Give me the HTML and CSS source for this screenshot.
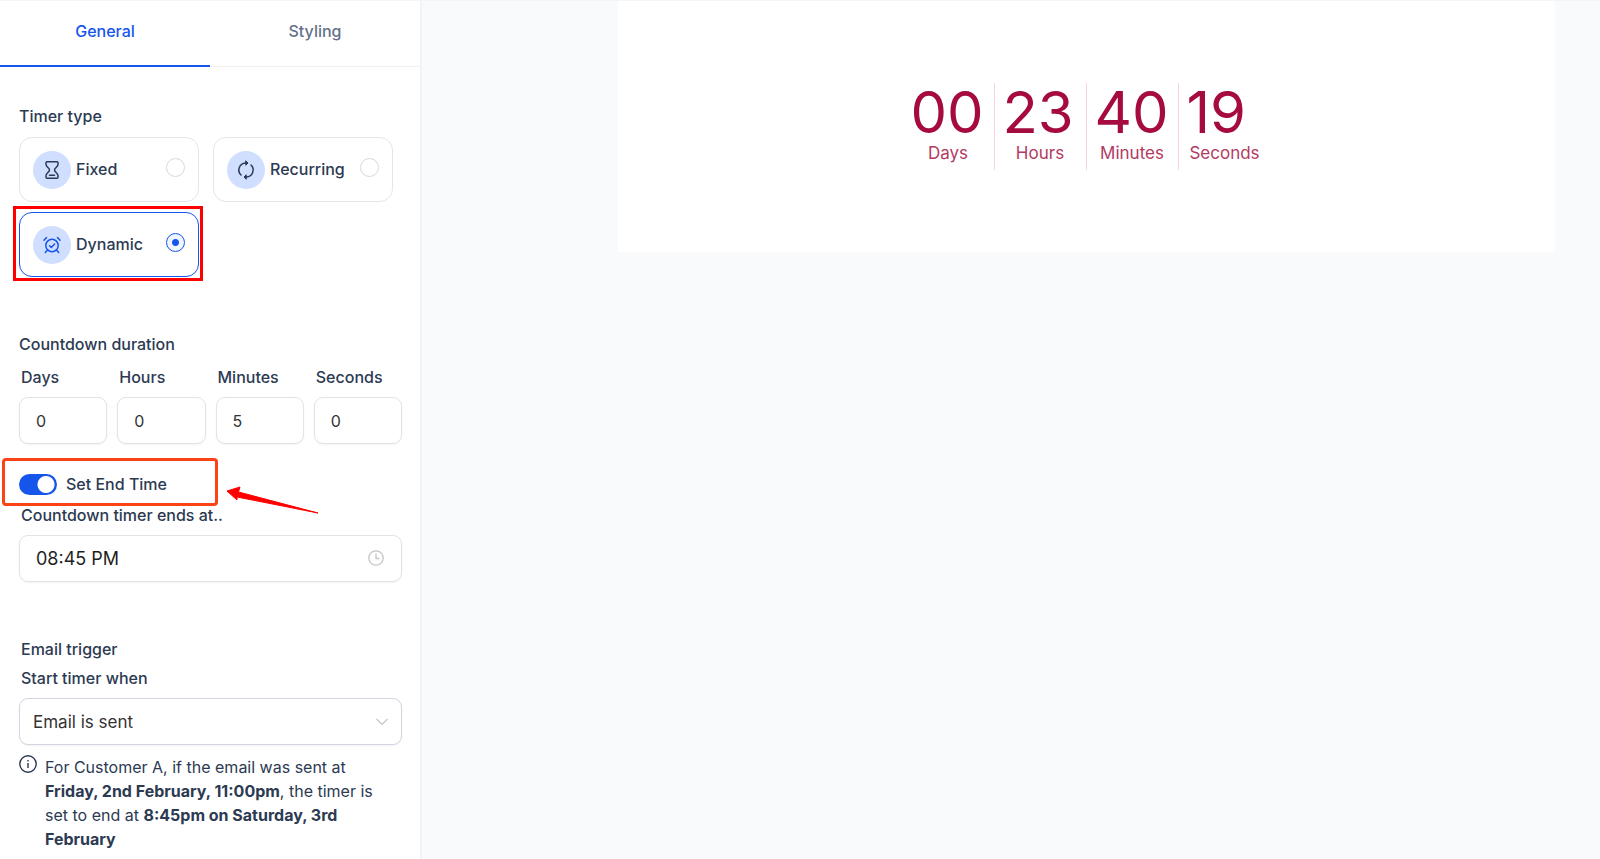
FILE: index.html
```html
<!DOCTYPE html>
<html lang="en">
<head>
  <meta charset="UTF-8">
  <meta name="viewport" content="width=device-width, initial-scale=1.0">
  <title>Countdown Timer</title>
  <link rel="stylesheet" href="styles.css">
</head>
<body>

  <aside class="sidebar">
    <nav class="tabs">
      <button type="button" class="tab active">General</button>
      <button type="button" class="tab">Styling</button>
    </nav>

    <form class="settings">
      <!-- Timer type -->
      <fieldset class="group">
        <legend class="title">Timer type</legend>
        <div class="types">
          <label class="type">
            <span class="type-icon">
              <svg width="20" height="20" viewBox="0 0 20 20" fill="none" stroke="currentColor" stroke-width="1.5" stroke-linejoin="round" stroke-linecap="round">
                <path d="M5 1.800h10a1 1 0 0 1 1 1v1.700c0 2.500-3.500 3.500-3.500 5.500s3.500 3 3.500 5.500v1.700a1 1 0 0 1-1 1H5a1 1 0 0 1-1-1v-1.700c0-2.500 3.500-3.500 3.500-5.500S4 7 4 4.500V2.800a1 1 0 0 1 1-1zM7.500 15.300h5"/>
              </svg>
            </span>
            <span class="type-name">Fixed</span>
            <input type="radio" name="type" class="radio">
          </label>
          <label class="type">
            <span class="type-icon">
              <svg width="20" height="20" viewBox="0 0 20 20" fill="none" stroke="currentColor" stroke-width="1.5" stroke-linejoin="round" stroke-linecap="round">
                <path d="M11 3H9.500A7 7 0 0 0 5 15M9 17h1.500A7 7 0 0 0 15 5"/>
                <path d="M10 1 12 3 10 5zM10 15 8 17l2 2z" fill="currentColor" stroke-width="1"/>
              </svg>
            </span>
            <span class="type-name">Recurring</span>
            <input type="radio" name="type" class="radio">
          </label>
          <label class="type selected">
            <span class="type-icon">
              <svg width="20" height="20" viewBox="0 0 20 20" fill="none" stroke="currentColor" stroke-width="1.5" stroke-linejoin="round" stroke-linecap="round">
                <circle cx="10" cy="10.500" r="6.200"/>
                <path d="M7.500 10.700l1.800 1.700 3.300-3.400M2 5.200 4.500 2.500M18 5.200l-2.500-2.700M5.500 15l-2.200 2.500M14.500 15l2.200 2.500"/>
              </svg>
            </span>
            <span class="type-name">Dynamic</span>
            <input type="radio" name="type" class="radio" checked>
          </label>
        </div>
      </fieldset>

      <!-- Countdown duration -->
      <fieldset class="group">
        <legend class="title">Countdown duration</legend>
        <div class="duration">
          <div class="field">
            <label for="days">Days</label>
            <input type="number" id="days" class="box" value="0">
          </div>
          <div class="field">
            <label for="hours">Hours</label>
            <input type="number" id="hours" class="box" value="0">
          </div>
          <div class="field">
            <label for="minutes">Minutes</label>
            <input type="number" id="minutes" class="box" value="5">
          </div>
          <div class="field">
            <label for="seconds">Seconds</label>
            <input type="number" id="seconds" class="box" value="0">
          </div>
        </div>

        <div class="end-toggle">
          <input type="checkbox" id="setEnd" class="switch" checked>
          <label for="setEnd">Set End Time</label>
          <svg class="arrow" width="94" height="30" viewBox="0 0 94 30">
            <path d="M1 5 14 1 12.500 6 92 27 11 11 11 14z" fill="#f00" stroke="#f00" stroke-linejoin="round"/>
          </svg>
        </div>

        <div class="field">
          <label for="endTime">Countdown timer ends at..</label>
          <div class="control">
            <input type="text" id="endTime" class="box time" value="08:45 PM">
            <svg class="control-icon" width="16" height="16" viewBox="0 0 16 16" fill="none" stroke="#c4c4c4" stroke-width="1.300">
              <circle cx="8" cy="8" r="7.200"/>
              <path d="M8 3.500V8.500h3.500"/>
            </svg>
          </div>
        </div>
      </fieldset>

      <!-- Email trigger -->
      <fieldset class="group">
        <legend class="title indent">Email trigger</legend>
        <div class="field trigger">
          <label for="trigger">Start timer when</label>
          <div class="control">
            <select id="trigger" class="box select">
              <option>Email is sent</option>
            </select>
            <svg class="control-icon chevron" width="12" height="8" viewBox="0 0 12 8" fill="none" stroke="#c4c4c4" stroke-width="1.200">
              <path d="M.5 1 6 6.500 11.500 1"/>
            </svg>
          </div>
        </div>
        <div class="note">
          <svg width="18" height="18" viewBox="0 0 18 18" fill="none" stroke="currentColor" stroke-width="1.400">
            <circle cx="9" cy="9" r="8.200"/>
            <path d="M9 8v5M9 5v1.600"/>
          </svg>
          <p>For Customer A, if the email was sent at <b>Friday, 2nd February, 11:00pm</b>, the timer is set to end at <b>8:45pm on Saturday, 3rd February</b></p>
        </div>
      </fieldset>
    </form>
  </aside>

  <main class="preview">
    <div class="canvas">
      <div class="timer">
        <div class="unit"><span class="number">00</span><span class="name">Days</span></div>
        <div class="unit"><span class="number">23</span><span class="name">Hours</span></div>
        <div class="unit"><span class="number">40</span><span class="name">Minutes</span></div>
        <div class="unit"><span class="number">19</span><span class="name">Seconds</span></div>
      </div>
    </div>
  </main>

</body>
</html>
```

FILE: styles.css
```css
* {
  box-sizing: border-box;
}
body {
  margin: 0;
  min-height: 100vh;
  display: flex;
  font-family: Inter, sans-serif;
  font-size: 16px;
  font-weight: 500;
  line-height: 24px;
  color: #2c3a52;
  background-color: #f8fafc;
  border-top: 1px solid #f3f5f8;
}
input, select, button {
  font-family: inherit;
  font-size: inherit;
}

/* Sidebar */
.sidebar {
  width: 422px;
  flex-shrink: 0;
  background-color: #fff;
  border-right: 2px solid #f1f3f7;
}
.tabs {
  display: flex;
  height: 66px;
}
.tab {
  flex: 1;
  padding: 0 0 6px;
  border: none;
  border-bottom: 1px solid #eef1f6;
  background: none;
  font-weight: 500;
  color: #64708a;
  cursor: pointer;
}
.tab.active {
  color: #1655ec;
  border-bottom: 2px solid #1655ec;
  padding-bottom: 5px;
}
.settings {
  display: flex;
  flex-direction: column;
  gap: 55px;
  padding: 37px 18px 0 19px;
}
.group {
  margin: 0;
  padding: 0;
  border: none;
  min-width: 0;
}
.title {
  padding: 0;
}
.title.indent {
  padding-left: 2px;
}

/* Timer type cards */
.types {
  display: grid;
  grid-template-columns: 1fr 1fr;
  gap: 10px 14px;
  margin: 9px 9px 0 0;
}
.type {
  position: relative;
  display: flex;
  align-items: center;
  height: 65px;
  padding: 0 13px;
  border: 1px solid #e3e5ea;
  border-radius: 13px;
}
.type-icon {
  display: flex;
  align-items: center;
  justify-content: center;
  width: 38px;
  height: 38px;
  margin-right: 5px;
  border-radius: 50%;
  background-color: #d0deff;
}
.type-name {
  flex: 1;
  padding-bottom: 2px;
}
.radio {
  appearance: none;
  width: 19px;
  height: 19px;
  margin: 0 0 4px;
  border: 1px solid #d5d9e2;
  border-radius: 50%;
  background-color: #fff;
}
.radio:checked {
  border-color: #1655ec;
  background: radial-gradient(circle, #1655ec 3px, #eff4ff 4px);
}
.type.selected {
  border-color: #1655ec;
}
.type.selected .type-icon {
  color: #1655ec;
}
.type.selected::after {
  content: "";
  position: absolute;
  inset: -7px -5px -5px -7px;
  border: 3px solid #f00;
}

/* Fields */
.field label {
  display: block;
  padding-left: 2px;
}
.box {
  display: block;
  width: 100%;
  height: 47px;
  margin-top: 8px;
  padding: 0 16px;
  border: 1px solid #e1e3e7;
  border-radius: 9px;
  background-color: #fff;
  color: #333;
  box-shadow: 0 1px 2px rgba(0, 0, 0, 0.05);
  appearance: none;
}
.box::-webkit-inner-spin-button {
  display: none;
}
.duration {
  display: grid;
  grid-template-columns: repeat(4, 1fr);
  gap: 10px;
  margin-top: 9px;
}
.control {
  position: relative;
}
.control-icon {
  position: absolute;
  top: 15px;
  right: 18px;
}
.control-icon.chevron {
  top: 20px;
  right: 14px;
}
.time {
  font-size: 18px;
  color: #1f1f1f;
}
.trigger {
  margin-top: 5px;
}
.select {
  padding: 0 13px;
  font-size: 17px;
  border-color: #d3d6e2;
}

/* End time switch */
.end-toggle {
  position: relative;
  display: flex;
  align-items: center;
  gap: 9px;
  margin: 28px 0 7px;
}
.end-toggle::before {
  content: "";
  position: absolute;
  inset: -14px 184px -10px -17px;
  border: 3px solid #fb4317;
  border-radius: 4px;
}
.switch {
  appearance: none;
  width: 38px;
  height: 21px;
  margin: 0;
  border-radius: 11px;
  background: radial-gradient(circle at 27px 50%, #fff 8px, #1655ec 9px);
}
.arrow {
  position: absolute;
  left: 207px;
  top: 14px;
}

/* Note */
.note {
  display: flex;
  gap: 8px;
  margin-top: 10px;
  padding-right: 24px;
  font-weight: 400;
}
.note svg {
  flex-shrink: 0;
}
.note p {
  margin: 0;
}
.note b {
  font-weight: 700;
}

/* Preview */
.preview {
  flex: 1;
  padding: 0 45px 0 196px;
}
.canvas {
  display: flex;
  justify-content: center;
  padding: 82px 0;
  background-color: #fff;
}
.timer {
  display: grid;
  grid-template-columns: repeat(4, 92px);
  color: #a50b40;
}
.unit {
  display: flex;
  flex-direction: column;
  height: 87px;
  padding: 0 8px;
  border-right: 1px solid #fbd5de;
}
.unit:last-child {
  border-right: none;
}
.number {
  font-size: 58px;
  font-weight: 400;
  line-height: 58px;
}
.name {
  text-align: center;
  font-size: 17px;
  font-weight: 400;
  color: #b23a62;
}
```
